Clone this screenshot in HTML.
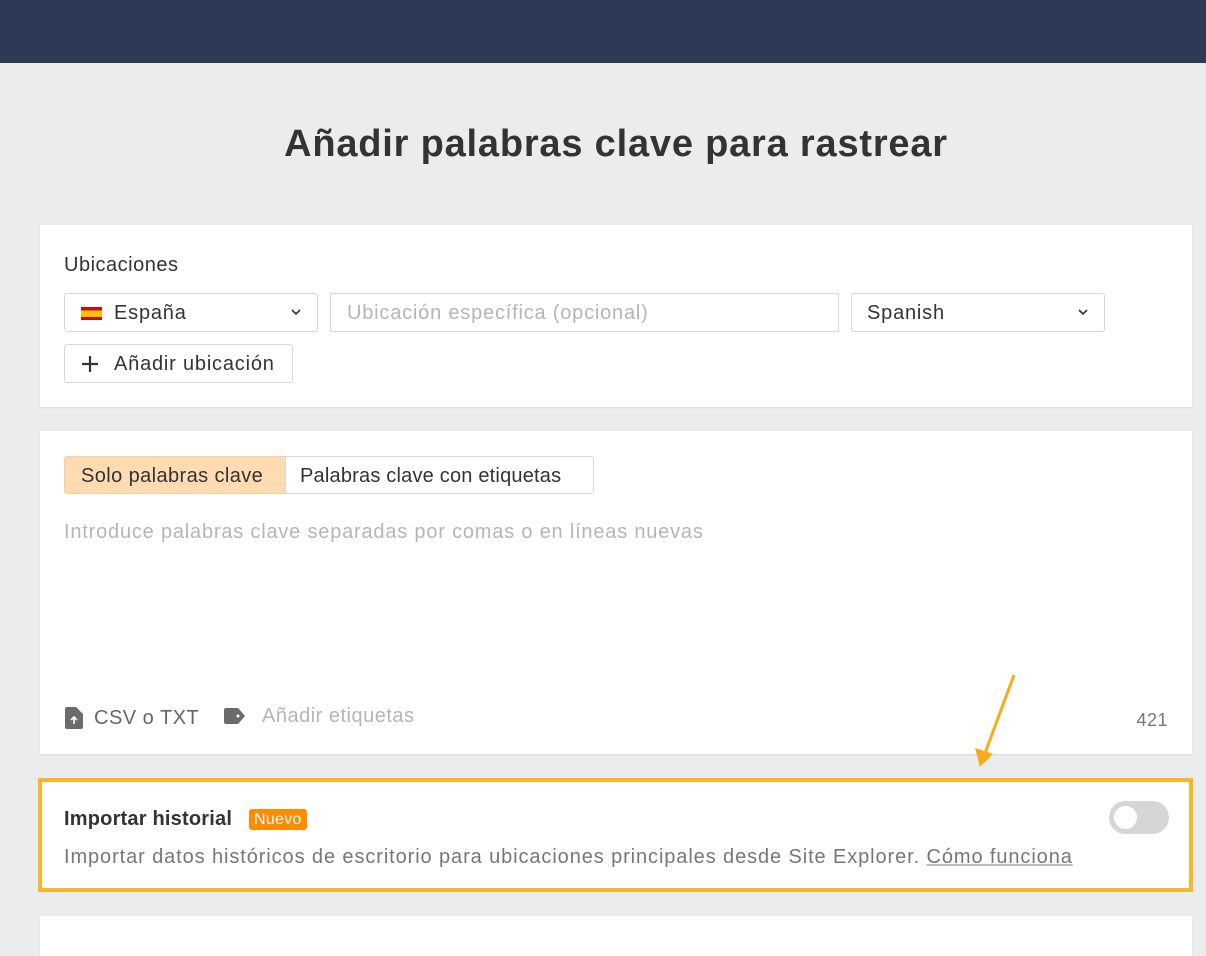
<!DOCTYPE html><html><head><style>
*{box-sizing:border-box;margin:0;padding:0}
body{width:1206px;height:935px;overflow:hidden;background:#ebecee;font-family:"Liberation Sans",sans-serif;color:#333;position:relative;letter-spacing:0.8px}
.top{position:absolute;left:0;top:0;width:1206px;height:63px;background:#2e3a55}
h1{position:absolute;top:123px;left:0;width:1232px;text-align:center;font-size:38px;font-weight:bold;color:#333;letter-spacing:0.8px}
.card{position:absolute;left:40px;width:1152px;background:#fff;box-shadow:0 1px 2px rgba(0,0,0,.08)}
.abs{position:absolute}
.box{position:absolute;border:1px solid #d5d7db;border-radius:3px;background:#fff;font-size:20px;line-height:38px}
</style></head><body>
<div class="top"></div>
<h1>Añadir palabras clave para rastrear</h1>
<div class="card" style="top:225px;height:182px">
 <div class="abs" style="left:24px;top:29px;font-size:20px;letter-spacing:0.5px">Ubicaciones</div>
 <div class="box" style="left:24px;top:68px;width:254px;height:39px;padding-left:49px">España
  <div class="abs" style="left:16px;top:13px;width:21px;height:13px;background:linear-gradient(#c60b1e 0 25%,#ffc400 25% 75%,#c60b1e 75%)"></div>
  <svg class="abs" style="right:16px;top:15px" width="10" height="7" viewBox="0 0 10 7"><path d="M1 1l4 4 4-4" stroke="#333" stroke-width="1.6" fill="none"/></svg></div>
 <div class="box" style="left:290px;top:68px;width:509px;height:39px;padding-left:16px;color:#b5b5b5;border-radius:0">Ubicación específica (opcional)</div>
 <div class="box" style="left:811px;top:68px;width:254px;height:39px;padding-left:15px">Spanish
  <svg class="abs" style="right:16px;top:15px" width="10" height="7" viewBox="0 0 10 7"><path d="M1 1l4 4 4-4" stroke="#333" stroke-width="1.6" fill="none"/></svg></div>
 <div class="box" style="left:24px;top:119px;width:229px;height:39px;padding-left:49px">Añadir ubicación
  <svg class="abs" style="left:16px;top:10px" width="18" height="18"><path d="M9 1v16M1 9h16" stroke="#333" stroke-width="2.2"/></svg></div>
</div>
<div class="card" style="top:431px;height:323px">
 <div class="box" style="left:24px;top:25px;width:222px;height:38px;background:#fedbb0;border-color:#f5cda0;border-radius:3px 0 0 3px;padding-left:16px;letter-spacing:0.4px">Solo palabras clave</div>
 <div class="box" style="left:245px;top:25px;width:309px;height:38px;border-radius:0 3px 3px 0;padding-left:14px;letter-spacing:0.2px">Palabras clave con etiquetas</div>
 <div class="abs" style="left:24px;top:90px;font-size:20px;color:#b5b5b5">Introduce palabras clave separadas por comas o en líneas nuevas</div>
 <svg class="abs" style="left:25px;top:276px" width="18" height="22"><path d="M0 2a2 2 0 0 1 2-2h9l7 7v13a2 2 0 0 1-2 2H2a2 2 0 0 1-2-2z" fill="#6b6b6b"/><path d="M9 17V10M6 13l3-3 3 3" stroke="#fff" stroke-width="1.6" fill="none"/></svg>
 <div class="abs" style="left:54px;top:276px;font-size:20px;color:#666;letter-spacing:0.5px">CSV o TXT</div>
 <svg class="abs" style="left:184px;top:277px" width="22" height="16"><path d="M2 0h12l7 8-7 8H2a2 2 0 0 1-2-2V2a2 2 0 0 1 2-2z" fill="#6b6b6b"/><circle cx="14" cy="8" r="1.5" fill="#fff"/></svg>
 <div class="abs" style="left:222px;top:274px;font-size:20px;color:#b5b5b5;letter-spacing:0.5px">Añadir etiquetas</div>
 <div class="abs" style="right:24px;top:279px;font-size:18px;color:#777;letter-spacing:0.5px">421</div>
</div>
<svg class="abs" style="left:965px;top:670px" width="60" height="105"><path d="M49 5L19 86" stroke="#fbaa19" stroke-width="3"/><path d="M10 78l5 19 13-13z" fill="#fbaa19"/></svg>
<div class="card" style="top:778px;left:38px;width:1155px;height:114px;border:4px solid #fbb52b;box-shadow:none">
 <div class="abs" style="left:22px;top:26px;font-size:20px;font-weight:bold;color:#333;letter-spacing:0.2px">Importar historial</div>
 <div class="abs" style="left:207px;top:27px;font-size:16px;background:#ff8c00;color:#fff;border-radius:3px;padding:0 5px;line-height:21px;letter-spacing:0.3px">Nuevo</div>
 <div class="abs" style="right:20px;top:19px;width:60px;height:33px;border-radius:17px;background:#d6d6d6"><div class="abs" style="left:5px;top:5px;width:23px;height:23px;border-radius:50%;background:#fff"></div></div>
 <div class="abs" style="left:22px;top:64px;font-size:20px;color:#777;letter-spacing:0.9px">Importar datos históricos de escritorio para ubicaciones principales desde Site Explorer. <span style="text-decoration:underline;text-decoration-color:#bbb">Cómo funciona</span></div>
</div>
<div class="card" style="top:916px;height:40px"></div>
</body></html>
